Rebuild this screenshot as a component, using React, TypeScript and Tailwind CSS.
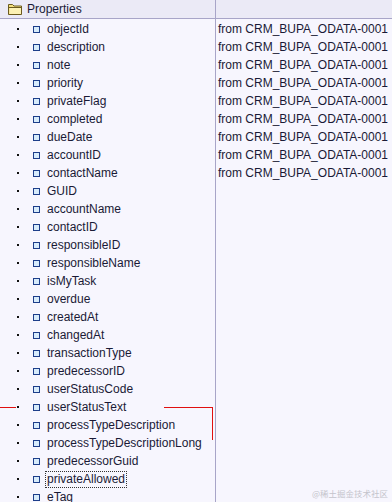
const props = [
  'objectId',
  'description',
  'note',
  'priority',
  'privateFlag',
  'completed',
  'dueDate',
  'accountID',
  'contactName',
  'GUID',
  'accountName',
  'contactID',
  'responsibleID',
  'responsibleName',
  'isMyTask',
  'overdue',
  'createdAt',
  'changedAt',
  'transactionType',
  'predecessorID',
  'userStatusCode',
  'userStatusText',
  'processTypeDescription',
  'processTypeDescriptionLong',
  'predecessorGuid',
  'privateAllowed',
  'eTag',
]

// first nine rows carry a source note
const sourced = 9

function Folder() {
  return (
    <svg width="15" height="12" viewBox="0 0 15 12" className="shrink-0">
      <path d="M0.5 1.5 h4 l1.5 1.5 h7.5 v8.5 h-13 z" fill="#f2de7e" stroke="#6b5a1e" />
      <path d="M0.5 4.5 h13" stroke="#6b5a1e" />
      <path d="M1.5 5 h11.5 v6 h-11.5 z" fill="#fcf1b4" />
    </svg>
  )
}

export default function App() {
  return (
    <div
      className="relative w-[392px] h-[502px] overflow-hidden bg-[#f7f6fe] text-[12px] text-[#1a1a36]"
      style={{ fontFamily: '"Liberation Sans", Arial, sans-serif' }}
    >
      <div className="flex h-[19px] bg-[#ebeaf6] border-b border-[#a8a5c8]">
        <div className="flex w-[216px] items-center gap-[4px] pl-[8px] border-r border-[#a8a5c8]">
          <Folder />
          <span className="leading-none">Properties</span>
        </div>
        <div className="flex-1" />
      </div>

      <div className="flex">
        <div className="w-[216px] pt-[1px] border-r border-[#a8a5c8]">
          {props.map((p) => (
            <div key={p} className="flex h-[18px] items-center">
              <span className="ml-[17px] w-[2px] h-[2px] bg-[#111] shrink-0" />
              <span className="ml-[14px] w-[7px] h-[7px] border border-[#1d3e8a] bg-[#d8ecfb] shrink-0" />
              <span
                className={
                  p === 'privateAllowed'
                    ? 'ml-[6px] px-[1px] leading-[15px] outline-1 outline-dotted outline-[#333]'
                    : 'ml-[7px] leading-none'
                }
              >
                {p}
              </span>
            </div>
          ))}
        </div>
        <div className="flex-1 pt-[1px]">
          {props.slice(0, sourced).map((p) => (
            <div key={p} className="flex h-[18px] items-center pl-[2px]">
              from CRM_BUPA_ODATA-0001
            </div>
          ))}
        </div>
      </div>

      {/* red markers */}
      <div className="absolute left-0 top-[407px] w-[16px] h-[1px] bg-[#e01010]" />
      <div className="absolute left-[164px] top-[407px] w-[49px] h-[1px] bg-[#e01010]" />
      <div className="absolute left-[212px] top-[407px] w-[1px] h-[33px] bg-[#e01010]" />

      <div
        className="absolute right-[4px] bottom-[5px] text-[8.5px] leading-none text-[#c4c4cc]"
        style={{ fontFamily: '"Noto Sans CJK SC", sans-serif' }}
      >
        @稀土掘金技术社区
      </div>
    </div>
  )
}
